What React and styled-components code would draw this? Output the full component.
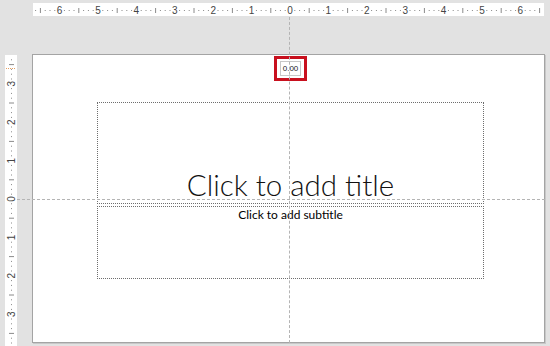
import React from 'react'
import styled, { createGlobalStyle } from 'styled-components'

const UNIT = 38.4

const Global = createGlobalStyle`
   html, body {
      margin: 0;
      padding: 0;
      background: #e2e2e2;
      font-family: "Lato", "Liberation Sans", sans-serif;
      overflow: hidden;
   }
`;

const HRuler = ({ width, zero }) => {
   const marks = []
   const step = UNIT / 8
   for (let i = -56; i <= 56; i++) {
      const x = zero + i * step
      if (x < 2 || x > width - 2) continue
      if (i % 8 === 0) {
         marks.push(
            <text key={i} x={x} y={10.5} fontSize="10" textAnchor="middle" fill="#444"
               fontFamily="Liberation Sans, sans-serif">{Math.abs(i / 8)}</text>
         )
      } else if (i % 4 === 0) {
         marks.push(<line key={i} x1={x} x2={x} y1={5} y2={10} stroke="#8a8a8a" strokeWidth="1" />)
      } else {
         marks.push(<rect key={i} x={x - 0.5} y={7} width={1} height={1} fill="#8a8a8a" />)
      }
   }
   return (
      <svg width={width} height={13}>
         <rect width={width} height={13} fill="#fff" />
         {marks}
      </svg>
   )
}

const VRuler = ({ height, zero }) => {
   const marks = []
   const step = UNIT / 8
   for (let i = -40; i <= 40; i++) {
      const y = zero + i * step
      if (y < 2 || y > height - 2) continue
      if (i % 8 === 0) {
         marks.push(
            <text key={i} x={0} y={0} fontSize="10" textAnchor="middle" fill="#444"
               fontFamily="Liberation Sans, sans-serif"
               transform={`translate(9.5 ${y}) rotate(-90)`}>{Math.abs(i / 8)}</text>
         )
      } else if (i % 4 === 0) {
         marks.push(<line key={i} x1={4} x2={9} y1={y} y2={y} stroke="#8a8a8a" strokeWidth="1" />)
      } else {
         marks.push(<rect key={i} x={6} y={y - 0.5} width={1} height={1} fill="#8a8a8a" />)
      }
   }
   return (
      <svg width={12} height={height}>
         <rect width={12} height={height} fill="#fff" />
         <line x1={1} x2={11} y1={13.5} y2={13.5} stroke="#e8a060" strokeWidth="1" strokeDasharray="1 1" />
         {marks}
      </svg>
   )
}

const App = () => {
   return (
      <>
         <Global />
         <Page>
            <Corner />
            <TopBar>
               <HRuler width={511} zero={257} />
            </TopBar>
            <SideBar>
               <VRuler height={291} zero={144} />
            </SideBar>
            <Slide>
               <TitleBox>
                  <Title>Click to add title</Title>
               </TitleBox>
               <SubtitleBox>
                  <Subtitle>Click to add subtitle</Subtitle>
               </SubtitleBox>
               <Badge>
                  <Readout>0.00</Readout>
               </Badge>
            </Slide>
            <VGuide />
            <HGuide />
         </Page>
      </>
   )
}

const Page = styled.div`
   position: relative;
   width: 550px;
   height: 346px;
   display: grid;
   grid-template-columns: 32px 513px 5px;
   grid-template-rows: 54px 289px 3px;
   background: #e2e2e2;
`;

const Corner = styled.div``;

const TopBar = styled.div`
   grid-column: 2 / 4;
   padding: 3px 0 0 1px;
   & > svg { display: block; }
`;

const SideBar = styled.div`
   grid-row: 2 / 4;
   grid-column: 1;
   padding: 1px 0 0 5px;
   overflow: hidden;
   & > svg { display: block; }
`;

const Slide = styled.div`
   grid-row: 2;
   grid-column: 2;
   position: relative;
   background: #fff;
   border: 1px solid #a4a4a4;
   box-sizing: border-box;
   box-shadow: 1px 1px 0 #c8c8c8;
   display: flex;
   flex-direction: column;
   padding: 47px 0 0 64px;
`;

const TitleBox = styled.div`
   width: 387px;
   height: 102px;
   box-sizing: border-box;
   border: 1px dotted #6e6e6e;
   display: flex;
   align-items: flex-end;
   justify-content: center;
   padding-bottom: 4px;
`;

const Title = styled.div`
   font-family: "Lato", "Liberation Sans", sans-serif;
   font-weight: 300;
   font-size: 29.5px;
   line-height: 1;
   color: #111;
`;

const SubtitleBox = styled.div`
   margin-top: 2px;
   width: 387px;
   height: 73px;
   box-sizing: border-box;
   border: 1px dotted #6e6e6e;
   display: flex;
   justify-content: center;
   padding-top: 1px;
`;

const Subtitle = styled.div`
   font-family: "Lato", "Liberation Sans", sans-serif;
   font-size: 12px;
   color: #000;
   line-height: 14px;
`;

const Badge = styled.div`
   position: absolute;
   left: 241px;
   top: 1px;
   width: 33px;
   height: 25px;
   box-sizing: border-box;
   border: 3px solid #c8101e;
   background: #fff;
   display: flex;
   align-items: center;
   justify-content: center;
`;

const Readout = styled.div`
   border: 1px solid #c8c8c8;
   font-family: "Liberation Sans", sans-serif;
   font-size: 8px;
   color: #222;
   padding: 2px 2px;
   line-height: 9px;
`;

const VGuide = styled.div`
   position: absolute;
   left: 289px;
   top: 17px;
   height: 326px;
   width: 0;
   border-left: 1px dashed #b4b4b4;
   pointer-events: none;
`;

const HGuide = styled.div`
   position: absolute;
   left: 17px;
   top: 199px;
   width: 528px;
   height: 0;
   border-top: 1px dashed #b4b4b4;
   pointer-events: none;
`;

export default App
